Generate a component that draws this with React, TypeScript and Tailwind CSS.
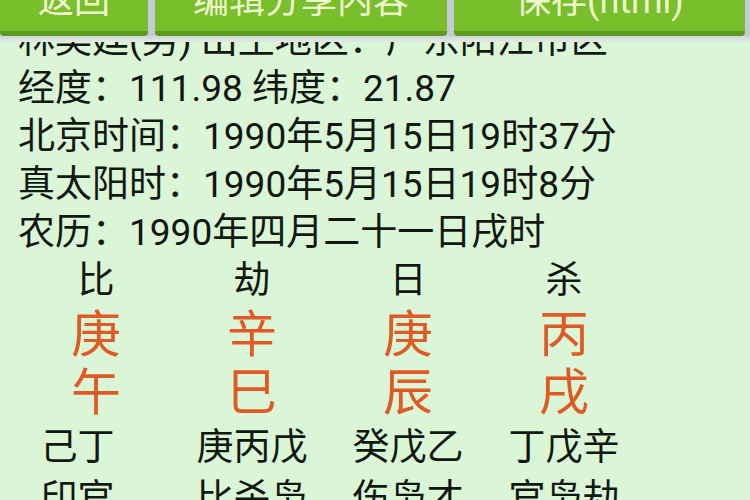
const pillars = [
  { god: '比', stem: '庚', branch: '午', hidden: '己丁', gods: '印官' },
  { god: '劫', stem: '辛', branch: '巳', hidden: '庚丙戊', gods: '比杀枭' },
  { god: '日', stem: '庚', branch: '辰', hidden: '癸戊乙', gods: '伤枭才' },
  { god: '杀', stem: '丙', branch: '戌', hidden: '丁戊辛', gods: '官枭劫' },
]

const infoLines = [
  '林奕廷(男) 出生地区：广东阳江市区',
  '经度：111.98 纬度：21.87',
  '北京时间：1990年5月15日19时37分',
  '真太阳时：1990年5月15日19时8分',
  '农历：1990年四月二十一日戌时',
]

function TopButton({ label, className }: { label: string; className: string }) {
  return (
    <div
      className={`h-[36px] overflow-hidden rounded-b-[4px] bg-[#79be2b] border-b-[5px] border-[#5c9a1d] flex items-end justify-center pb-[12px] ${className}`}
    >
      <span className="text-[36px] leading-[36px] text-[#eef8cf] whitespace-nowrap">{label}</span>
    </div>
  )
}

export default function App() {
  return (
    <div className="w-[750px] h-[500px] overflow-hidden bg-[#dbf5d7] font-['Roboto','Noto_Sans_CJK_SC',sans-serif]">
      {/* action bar */}
      <div className="flex gap-[7px] bg-[#c4cbd5] pr-[5px]">
        <TopButton label="返回" className="w-[148px]" />
        <TopButton label="编辑分享内容" className="w-[292px]" />
        <TopButton label="保存(html)" className="flex-1" />
      </div>
      <div className="h-[6px] bg-gradient-to-b from-[#cdd4da] to-[#e2ede4]" />

      <div className="h-[458px] overflow-hidden">
        <div className="-mt-[25px] pl-[18px] text-[37px] leading-[48px] text-[#111811]">
          {infoLines.map((line) => (
            <div key={line} className="whitespace-nowrap">
              {line}
            </div>
          ))}

          <div className="grid grid-cols-[156px_156px_156px_156px] text-center">
            {pillars.map((p) => (
              <div key={p.god + p.hidden} className="flex flex-col items-center">
                <div className="h-[48px]">{p.god}</div>
                <div className="h-[60px] text-[50px] leading-[60px] text-[#e05a26]">{p.stem}</div>
                <div className="h-[56px] text-[50px] leading-[56px] text-[#e05a26]">{p.branch}</div>
                <div className="h-[54px] leading-[54px]">
                  <span className="inline-block w-[111px] text-left">{p.hidden}</span>
                </div>
                <div className="h-[48px]">
                  <span className="inline-block w-[111px] text-left">{p.gods}</span>
                </div>
              </div>
            ))}
          </div>
        </div>
      </div>
    </div>
  )
}
